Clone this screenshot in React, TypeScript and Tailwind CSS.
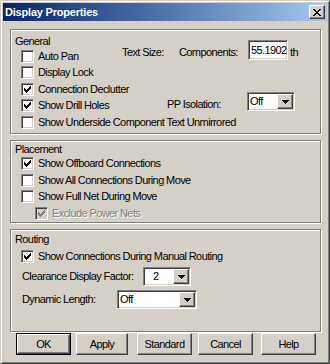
const sunken =
  "border border-t-[#808080] border-l-[#808080] border-r-white border-b-white shadow-[inset_1px_1px_0_#404040,inset_-1px_-1px_0_#d4d0c8]";
const raised =
  "border border-t-white border-l-white border-r-[#404040] border-b-[#404040] shadow-[inset_-1px_-1px_0_#808080,inset_1px_1px_0_#d4d0c8]";
const etched = "border border-[#808080] shadow-[inset_1px_1px_0_white,1px_1px_0_white]";

const checkPath =
  "M6 0h1v1h-1z M5 1h2v1h-2z M0 2h1v1h-1z M4 2h3v1h-3z M0 3h2v1h-2z M3 3h3v1h-3z M0 4h5v1h-5z M1 5h3v1h-3z M2 6h1v1h-1z";

function CheckBox({ checked, disabled }: { checked?: boolean; disabled?: boolean }) {
  return (
    <span
      className={`flex h-[13px] w-[13px] shrink-0 items-center justify-center ${sunken} ${
        disabled ? "bg-[#d4d0c8]" : "bg-white"
      }`}
    >
      {checked && (
        <svg width="7" height="7" viewBox="0 0 7 7" shapeRendering="crispEdges">
          <path d={checkPath} fill={disabled ? "#808080" : "#000"} />
        </svg>
      )}
    </span>
  );
}

function Row({
  label,
  checked,
  disabled,
  indent,
  className = "",
}: {
  label: string;
  checked?: boolean;
  disabled?: boolean;
  indent?: boolean;
  className?: string;
}) {
  return (
    <div className={`flex h-[16.5px] items-center ${indent ? "pl-[24px]" : "pl-[10px]"} ${className}`}>
      <CheckBox checked={checked} disabled={disabled} />
      <span
        className={`ml-[4px] whitespace-nowrap ${
          disabled ? "text-[#808080] [text-shadow:1px_1px_0_#fff]" : ""
        }`}
      >
        {label}
      </span>
    </div>
  );
}

function Arrow() {
  return (
    <svg width="7" height="4" viewBox="0 0 7 4" shapeRendering="crispEdges">
      <path d="M0 0h7v1h-7z M1 1h5v1h-5z M2 2h3v1h-3z M3 3h1v1h-1z" fill="#000" />
    </svg>
  );
}

function Select({ value, width, textPad }: { value: string; width: string; textPad: string }) {
  return (
    <div className={`flex h-[19px] shrink-0 bg-white p-[1px] ${width} ${sunken}`}>
      <span className={`flex-1 leading-[15px] ${textPad}`}>{value}</span>
      <span className={`flex w-[16px] items-center justify-center bg-[#d4d0c8] ${raised}`}>
        <Arrow />
      </span>
    </div>
  );
}

function Button({ label, className, isDefault }: { label: string; className: string; isDefault?: boolean }) {
  if (isDefault) {
    return (
      <div className={`h-[22px] border border-black ${className}`}>
        <div className={`flex h-full items-center justify-center bg-[#d4d0c8] ${raised}`}>{label}</div>
      </div>
    );
  }
  return (
    <div className={`flex h-[22px] items-center justify-center bg-[#d4d0c8] ${raised} ${className}`}>{label}</div>
  );
}

export default function App() {
  return (
    <div className="h-[364px] w-[330px] overflow-hidden border border-t-[#d4d0c8] border-l-[#d4d0c8] border-r-[#404040] border-b-[#404040] bg-[#d4d0c8] p-[2px] font-['Liberation_Sans',Arial,sans-serif] text-[11px] leading-[13px] tracking-[-0.6px] text-black shadow-[inset_1px_1px_0_white,inset_-1px_-1px_0_#808080]">
      {/* title bar */}
      <div className="flex h-[18px] items-center bg-gradient-to-r from-[#0a246a] to-[#a6caf0] pl-[2px]">
        <span className="flex-1 text-[11px] font-bold tracking-[-0.2px] text-white">Display Properties</span>
        <span className={`mr-[2px] flex h-[14px] w-[16px] items-center justify-center bg-[#d4d0c8] ${raised}`}>
          <svg width="8" height="7" viewBox="0 0 8 7" shapeRendering="crispEdges">
            <path
              d="M0 0h2v1h-2z M6 0h2v1h-2z M1 1h2v1h-2z M5 1h2v1h-2z M2 2h4v1h-4z M3 3h2v1h-2z M2 4h4v1h-4z M1 5h2v1h-2z M5 5h2v1h-2z M0 6h2v1h-2z M6 6h2v1h-2z"
              fill="#000"
            />
          </svg>
        </span>
      </div>

      <div className="pl-[7px] pt-[8px]">
        {/* General */}
        <div className={`h-[105px] w-[311px] ${etched}`}>
          <div className="flex">
            <div className="w-[111px] shrink-0 pt-[5px]">
              <div className="pl-[4px]">General</div>
              <Row label="Auto Pan" />
              <Row label="Display Lock" />
              <Row label="Connection Declutter" checked />
              <Row label="Show Drill Holes" checked />
            </div>
            <div className="pt-[10px]">
              <div className="flex items-start">
                <span className="w-[57px] pt-[6px]">Text Size:</span>
                <span className="w-[69px] pt-[6px]">Components:</span>
                <div className={`h-[20px] w-[40px] overflow-hidden whitespace-nowrap bg-white p-[1px] pl-[2px] ${sunken}`}>
                  <span className="leading-[16px]">55.1902</span>
                </div>
                <span className="ml-[2px] pt-[6px]">th</span>
              </div>
              <div className="mt-[32px] flex items-start pl-[45px]">
                <span className="w-[80px] pt-[6px]">PP Isolation:</span>
                <Select value="Off" width="w-[48px]" textPad="pl-[1px]" />
              </div>
            </div>
          </div>
          <Row label="Show Underside Component Text Unmirrored" />
        </div>

        {/* Placement */}
        <div className={`mt-[6px] h-[83px] w-[311px] pt-[1.5px] ${etched}`}>
          <div className="pl-[4px]">Placement</div>
          <Row label="Show Offboard Connections" checked />
          <Row label="Show All Connections During Move" />
          <Row label="Show Full Net During Move" />
          <Row label="Exclude Power Nets" checked disabled indent />
        </div>

        {/* Routing */}
        <div className={`mt-[6px] h-[103px] w-[311px] pt-[3px] ${etched}`}>
          <div className="pl-[4px]">Routing</div>
          <Row label="Show Connections During Manual Routing" checked className="mt-[2.5px]" />
          <div className="mt-[2px] flex h-[19px] items-center pl-[11px]">
            <span className="w-[121px]">Clearance Display Factor:</span>
            <Select value="2" width="w-[48px]" textPad="pl-[8px]" />
          </div>
          <div className="mt-[4px] flex h-[19px] items-center pl-[11px]">
            <span className="w-[95px]">Dynamic Length:</span>
            <Select value="Off" width="w-[80px]" textPad="pl-[1px]" />
          </div>
        </div>

        {/* buttons */}
        <div className="mt-[1px] flex">
          <Button label="OK" isDefault className="ml-[6px] w-[55px]" />
          <Button label="Apply" className="ml-[5px] w-[52px]" />
          <Button label="Standard" className="ml-[9px] w-[55px]" />
          <Button label="Cancel" className="ml-[6px] w-[55px]" />
          <Button label="Help" className="ml-[8px] w-[55px]" />
        </div>
      </div>
    </div>
  );
}
